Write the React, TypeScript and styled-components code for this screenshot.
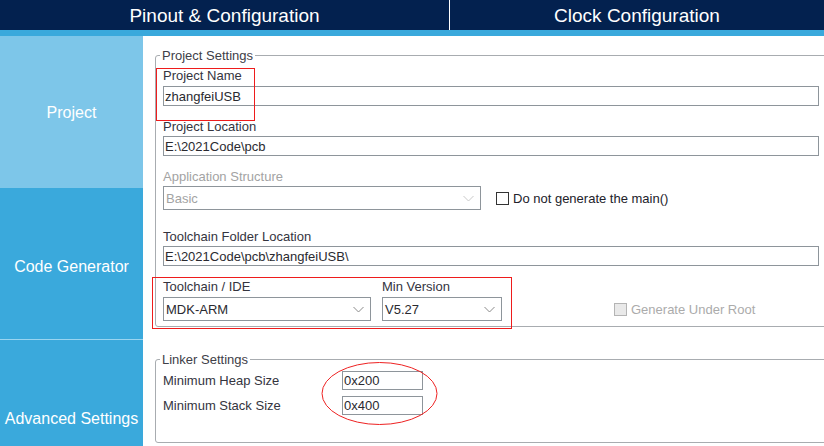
import React from "react";
import styled, { createGlobalStyle } from "styled-components";

const GlobalStyle = createGlobalStyle`
  html, body { margin: 0; padding: 0; background: #ffffff; overflow: hidden; }
  body { font-family: "Liberation Sans", Arial, sans-serif; }
  * { box-sizing: border-box; }
`;

const Page = styled.div`
  position: relative;
  width: 824px;
  height: 446px;
  overflow: hidden;
  display: flex;
  flex-direction: column;
  font-family: "Liberation Sans", Arial, sans-serif;
`;

const Header = styled.div`
  display: grid;
  grid-template-columns: 449px 1fr;
  height: 30px;
  background: #03214f;
`;

const Tab = styled.div<{ $divider?: boolean }>`
  color: #ffffff;
  font-size: 19px;
  line-height: 28px;
  padding-top: 2px;
  text-align: center;
  border-left: ${(p) => (p.$divider ? "1px solid #ffffff" : "none")};
`;

const Strip = styled.div`
  height: 6px;
  background: #3aa9dc;
  flex: none;
`;

const Body = styled.div`
  display: flex;
  flex: 1;
  min-height: 0;
`;

const Sidebar = styled.div`
  width: 143px;
  flex: none;
  display: flex;
  flex-direction: column;
`;

const NavItem = styled.div<{ $tone: "light" | "dark"; $h: number; $pt?: number }>`
  height: ${(p) => p.$h}px;
  flex: none;
  background: ${(p) => (p.$tone === "light" ? "#7dc6e9" : "#3aa9dc")};
  color: #ffffff;
  font-size: 16px;
  display: flex;
  align-items: center;
  justify-content: center;
  padding-top: ${(p) => p.$pt ?? 2}px;
`;

const NavSep = styled.div`
  height: 1px;
  background: #9ad5f0;
  flex: none;
`;

const Content = styled.div`
  flex: 1;
  padding: 12px 0 0 12px;
  display: flex;
  flex-direction: column;
`;

const Group = styled.fieldset<{ $pt: number; $pb: number; $mt?: number }>`
  margin: ${(p) => p.$mt ?? 0}px 0 0 0;
  width: 690px;
  min-width: 0;
  border: 1px solid #a8acb0;
  border-radius: 3px;
  padding: ${(p) => p.$pt}px 0 ${(p) => p.$pb}px 7px;
`;

const Legend = styled.legend`
  font-size: 13px;
  line-height: 15px;
  color: #404048;
  padding: 0 2px;
  margin-left: -3px;
`;

const Field = styled.div<{ $mt?: number }>`
  margin-top: ${(p) => p.$mt ?? 0}px;
  display: flex;
  flex-direction: column;
`;

const Label = styled.div<{ $mb?: number; $disabled?: boolean }>`
  font-size: 13px;
  line-height: 15px;
  color: ${(p) => (p.$disabled ? "#a3a3a3" : "#34343e")};
  margin-bottom: ${(p) => p.$mb ?? 2}px;
  white-space: nowrap;
`;

const TextBox = styled.div<{ $w: number; $h?: number }>`
  width: ${(p) => p.$w}px;
  height: ${(p) => p.$h ?? 20}px;
  border: 1px solid #8e959b;
  background: #ffffff;
  font-size: 13px;
  color: #2a2a30;
  padding-left: 1px;
  display: flex;
  align-items: center;
  white-space: nowrap;
`;

const SelectBox = styled.div<{ $w: number; $disabled?: boolean }>`
  width: ${(p) => p.$w}px;
  height: 24px;
  border: 1px solid #8e959b;
  background: #ffffff;
  font-size: 13px;
  color: ${(p) => (p.$disabled ? "#a3a3a3" : "#2a2a30")};
  padding: 0 6px 0 2px;
  display: flex;
  align-items: center;
  justify-content: space-between;
  white-space: nowrap;
`;

const Row = styled.div<{ $gap: number; $align?: string; $mt?: number }>`
  display: flex;
  align-items: ${(p) => p.$align ?? "center"};
  gap: ${(p) => p.$gap}px;
  margin-top: ${(p) => p.$mt ?? 0}px;
`;

const Check = styled.div<{ $disabled?: boolean; $ml?: number; $h?: number }>`
  display: flex;
  align-items: center;
  gap: 4px;
  margin-left: ${(p) => p.$ml ?? 0}px;
  height: ${(p) => (p.$h ? `${p.$h}px` : "auto")};
  font-size: 13px;
  color: ${(p) => (p.$disabled ? "#ababab" : "#22222a")};
  white-space: nowrap;
`;

const CheckSquare = styled.span<{ $disabled?: boolean }>`
  width: 13px;
  height: 13px;
  flex: none;
  border: 1px solid ${(p) => (p.$disabled ? "#b4b4b4" : "#333333")};
  background: ${(p) => (p.$disabled ? "#e9e9e9" : "#ffffff")};
`;

const LinkerRow = styled.div<{ $mt?: number }>`
  display: flex;
  align-items: center;
  margin-top: ${(p) => p.$mt ?? 0}px;
`;

const LinkerLabel = styled.div`
  width: 179px;
  font-size: 13px;
  color: #34343e;
  white-space: nowrap;
`;

const RedBox = styled.div<{ $x: number; $y: number; $w: number; $h: number }>`
  position: absolute;
  left: ${(p) => p.$x}px;
  top: ${(p) => p.$y}px;
  width: ${(p) => p.$w}px;
  height: ${(p) => p.$h}px;
  border: 1px solid #ee1c1c;
  pointer-events: none;
`;

const EllipseLayer = styled.svg`
  position: absolute;
  left: 320px;
  top: 360px;
  pointer-events: none;
`;

const Chevron = ({ disabled }: { disabled?: boolean }) => (
  <svg width="11" height="7" viewBox="0 0 11 7">
    <path
      d="M0.5 1 L5.5 6 L10.5 1"
      fill="none"
      stroke={disabled ? "#c9c9c9" : "#8a8a8a"}
      strokeWidth="1"
    />
  </svg>
);

export default function App() {
  return (
    <>
      <GlobalStyle />
      <Page>
        <Header>
          <Tab>Pinout &amp; Configuration</Tab>
          <Tab $divider>Clock Configuration</Tab>
        </Header>
        <Strip />
        <Body>
          <Sidebar>
            <NavItem $tone="light" $h={152}>Project</NavItem>
            <NavItem $tone="dark" $h={151} $pt={6}>Code Generator</NavItem>
            <NavSep />
            <NavItem $tone="dark" $h={156}>Advanced Settings</NavItem>
          </Sidebar>
          <Content>
            <Group $pt={5} $pb={5}>
              <Legend>Project Settings</Legend>
              <Field>
                <Label $mb={3}>Project Name</Label>
                <TextBox $w={656}>zhangfeiUSB</TextBox>
              </Field>
              <Field $mt={13}>
                <Label>Project Location</Label>
                <TextBox $w={656}>E:\2021Code\pcb</TextBox>
              </Field>
              <Field $mt={13}>
                <Label $disabled>Application Structure</Label>
                <Row $gap={15}>
                  <SelectBox $w={318} $disabled>
                    <span>Basic</span>
                    <Chevron disabled />
                  </SelectBox>
                  <Check>
                    <CheckSquare />
                    Do not generate the main()
                  </Check>
                </Row>
              </Field>
              <Field $mt={19}>
                <Label>Toolchain Folder Location</Label>
                <TextBox $w={656}>E:\2021Code\pcb\zhangfeiUSB\</TextBox>
              </Field>
              <Row $gap={11} $align="flex-end" $mt={13}>
                <Field>
                  <Label $mb={3}>Toolchain / IDE</Label>
                  <SelectBox $w={208}>
                    <span>MDK-ARM</span>
                    <Chevron />
                  </SelectBox>
                </Field>
                <Field>
                  <Label $mb={3}>Min Version</Label>
                  <SelectBox $w={120}>
                    <span>V5.27</span>
                    <Chevron />
                  </SelectBox>
                </Field>
                <Check $disabled $ml={101} $h={24}>
                  <CheckSquare $disabled />
                  Generate Under Root
                </Check>
              </Row>
            </Group>
            <Group $pt={4} $pb={27} $mt={25}>
              <Legend>Linker Settings</Legend>
              <LinkerRow>
                <LinkerLabel>Minimum Heap Size</LinkerLabel>
                <TextBox $w={81} $h={19}>0x200</TextBox>
              </LinkerRow>
              <LinkerRow $mt={6}>
                <LinkerLabel>Minimum Stack Size</LinkerLabel>
                <TextBox $w={81} $h={19}>0x400</TextBox>
              </LinkerRow>
            </Group>
          </Content>
        </Body>
        <RedBox $x={156} $y={68} $w={99} $h={53} />
        <RedBox $x={152} $y={277} $w={360} $h={52} />
        <EllipseLayer width="120" height="68" viewBox="0 0 120 68">
          <ellipse cx="59.5" cy="33.5" rx="57.5" ry="31" fill="none" stroke="#ee2222" strokeWidth="1" />
        </EllipseLayer>
      </Page>
    </>
  );
}
